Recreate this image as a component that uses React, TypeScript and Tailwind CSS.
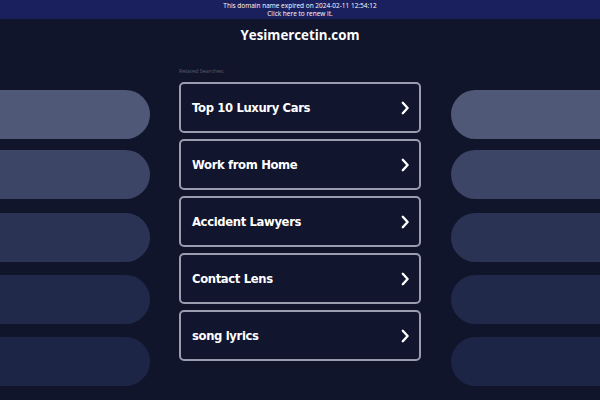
import React from 'react';

const searches = ['Top 10 Luxury Cars', 'Work from Home', 'Accident Lawyers', 'Contact Lens', 'song lyrics'];

// decorative pills on both sides, lighter at the top
const pills = [
  'bg-[#4f5877] mt-[24px]',
  'bg-[#3c4565] mt-[11px]',
  'bg-[#2b3354] mt-[14px]',
  'bg-[#20294a] mt-[13px]',
  'bg-[#1c2545] mt-[13px]',
];

const Chevron: React.FC = () => (
  <svg width="10" height="14" viewBox="0 0 10 14" fill="none">
    <polyline points="2.8,1.8 7.6,7 2.8,12.2" stroke="#ffffff" strokeWidth="2.4" strokeLinecap="round" strokeLinejoin="round" />
  </svg>
);

const SearchBox: React.FC<{ label: string }> = ({ label }) => (
  <div className="h-[51px] flex items-center justify-between pl-[11px] pr-[9px] border-2 border-[#9a9db0] rounded-[5px] bg-[#11152e] cursor-pointer">
    <span className="pt-[2px] text-white font-bold text-[11.6px] tracking-[-0.35px] font-['DejaVu_Sans',sans-serif]">{label}</span>
    <Chevron />
  </div>
);

export default function App() {
  return (
    <div className="w-[600px] h-[400px] overflow-hidden bg-[#11152b] font-['Open_Sans',sans-serif]">
      <div className="h-[19px] bg-[#1a1f5e] flex flex-col items-center justify-center text-white text-[6.5px] leading-[8px]">
        <span>This domain name expired on 2024-02-11 12:54:12</span>
        <span>Click here to renew it.</span>
      </div>
      <div className="h-[47px] flex justify-center pt-[6px]">
        <h1 className="text-white font-bold text-[13.3px] leading-[20px]">Yesimercetin.com</h1>
      </div>
      <div className="flex">
        <div className="w-[150px] flex flex-col">
          {pills.map((p, i) => (
            <div key={i} className={`h-[49px] rounded-r-full ${p}`} />
          ))}
        </div>
        <div className="w-[242px] ml-[29px] mr-[30px] flex flex-col">
          <div className="text-[5.5px] leading-[10px] text-[#565b73] mb-[6px]">Related Searches:</div>
          <div className="flex flex-col gap-[6px]">
            {searches.map(s => (
              <SearchBox key={s} label={s} />
            ))}
          </div>
        </div>
        <div className="flex-1 flex flex-col">
          {pills.map((p, i) => (
            <div key={i} className={`h-[49px] rounded-l-full ${p}`} />
          ))}
        </div>
      </div>
    </div>
  );
}
